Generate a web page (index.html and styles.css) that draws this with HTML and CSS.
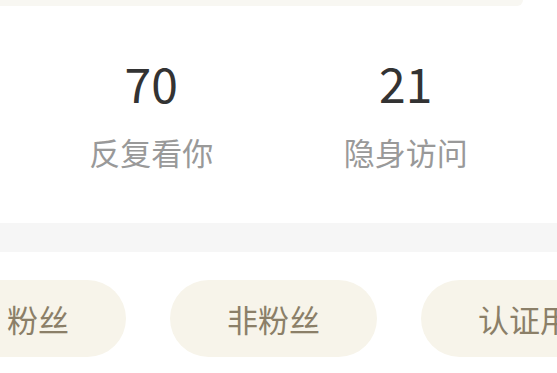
FILE: index.html
```html
<!DOCTYPE html>
<html>
<head>
  <meta charset="utf-8">
  <link rel="stylesheet" href="styles.css">
</head>
<body>
  <div class="card-end"></div>

  <div class="stats">
    <div class="stat">
      <div class="stat-num">70</div>
      <div class="stat-label">反复看你</div>
    </div>
    <div class="stat">
      <div class="stat-num">21</div>
      <div class="stat-label">隐身访问</div>
    </div>
  </div>

  <div class="divider"></div>

  <div class="tabs">
    <div class="tab">粉丝</div>
    <div class="tab">非粉丝</div>
    <div class="tab">认证用户</div>
  </div>
</body>
</html>
```

FILE: styles.css
```css
html, body {
  margin: 0;
  padding: 0;
  background: #ffffff;
  overflow: hidden;
}

body {
  width: 557px;
  height: 373px;
  font-family: "Noto Sans CJK SC", "Noto Sans", sans-serif;
}

.card-end {
  width: 523px;
  height: 6px;
  background-color: #f8f7f2;
  border-bottom-right-radius: 12px;
}

.stats {
  display: flex;
  padding: 52px 24px 56px 24px;
}

.stat {
  flex: 1;
  display: flex;
  flex-direction: column;
  align-items: center;
}

.stat-num {
  font-size: 48px;
  line-height: 48px;
  color: #333333;
}

.stat-label {
  margin-top: 30px;
  font-size: 31px;
  line-height: 31px;
  color: #999999;
}

.divider {
  height: 29px;
  background-color: #f6f6f6;
}

.tabs {
  display: flex;
  gap: 44px;
  margin-left: -50px;
  padding-top: 28px;
  white-space: nowrap;
}

.tab {
  flex-shrink: 0;
  height: 77px;
  line-height: 77px;
  padding: 0 57px;
  border-radius: 39px;
  background-color: #f7f4ea;
  color: #8b7f68;
  font-size: 31px;
}
```
